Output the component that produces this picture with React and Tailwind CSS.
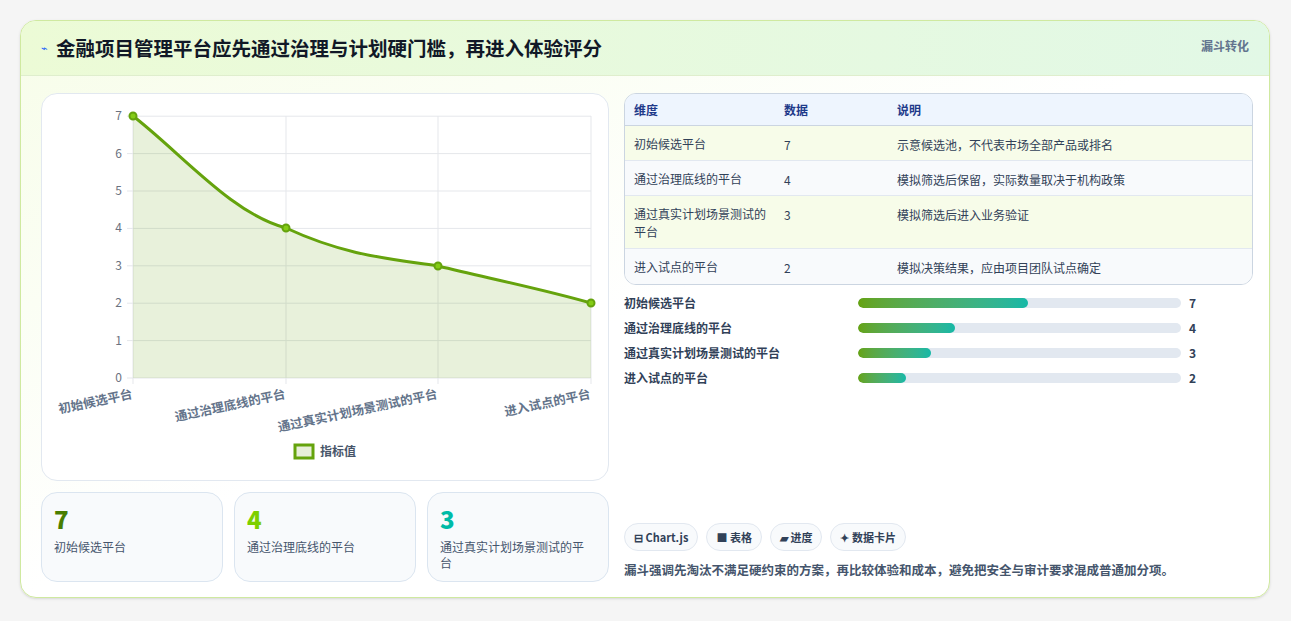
import React from "react";

const rows = [
  { name: "初始候选平台", value: 7, note: "示意候选池，不代表市场全部产品或排名" },
  { name: "通过治理底线的平台", value: 4, note: "模拟筛选后保留，实际数量取决于机构政策" },
  { name: "通过真实计划场景测试的平台", value: 3, note: "模拟筛选后进入业务验证" },
  { name: "进入试点的平台", value: 2, note: "模拟决策结果，应由项目团队试点确定" },
];

const font = { fontFamily: '"Noto Sans CJK SC", "Noto Sans", sans-serif' };

// chart geometry, in svg coords (svg placed at card origin x40,y93)
const pts = [
  [91, 22],
  [244, 134],
  [396, 172],
  [549, 209],
];
const base = 284;

function Chart() {
  const line = `M91 22 C140 60 190 120 244 134 C300 160 340 164 396 172 C450 185 500 195 549 209`;
  const area = `${line} L549 ${base} L91 ${base} Z`;
  const ys = [0, 1, 2, 3, 4, 5, 6, 7];
  return (
    <svg width="566" height="385" className="block">
      {ys.map((v) => {
        const y = base - v * 37.4;
        return (
          <g key={v}>
            <line x1="85" x2="549" y1={y} y2={y} stroke="#e5e7eb" />
            <text x="80" y={y + 4} textAnchor="end" fontSize="12" fill="#6b7280" style={font}>
              {v}
            </text>
          </g>
        );
      })}
      {pts.map(([x], i) => (
        <line key={i} x1={x} x2={x} y1="22" y2={base + 6} stroke="#e5e7eb" />
      ))}
      <path d={area} fill="rgba(101,163,13,0.15)" />
      <path d={line} fill="none" stroke="#65a30d" strokeWidth="3" />
      {pts.map(([x, y], i) => (
        <circle key={i} cx={x} cy={y} r="3.5" fill="#84cc16" stroke="#65a30d" strokeWidth="2" />
      ))}
      {rows.map((r, i) => (
        <text
          key={i}
          x={pts[i][0]}
          y={base + 20}
          textAnchor="end"
          fontSize="12.5"
          fontWeight="700"
          fill="#64748b"
          transform={`rotate(-12 ${pts[i][0]} ${base + 20})`}
          style={font}
        >
          {r.name}
        </text>
      ))}
      <rect x="253" y="351" width="18" height="13" fill="#e7efd9" stroke="#65a30d" strokeWidth="3" />
      <text x="278" y="362" fontSize="12" fill="#475569" fontWeight="600" style={font}>
        指标值
      </text>
    </svg>
  );
}

export default function App() {
  const cardColors = ["text-lime-700", "text-lime-500", "text-teal-500"];
  return (
    <div className="w-[1291px] h-[621px] bg-[#f5f5f5] pt-5 pl-5" style={font}>
      <div className="w-[1250px] h-[578px] rounded-2xl border border-[#cfe9a0] bg-gradient-to-br from-[#f7fde9] via-white to-white overflow-hidden shadow-sm">
        <div className="h-[55px] flex items-start justify-between px-5 pt-[12px] bg-gradient-to-r from-[#ecfbd6] to-[#e2f8e6] border-b border-[#dfeecd]">
          <div className="flex items-center gap-2">
            <span className="text-[11px] text-blue-600">⌁</span>
            <h1 className="text-[19.5px] font-bold text-[#111827]">金融项目管理平台应先通过治理与计划硬门槛，再进入体验评分</h1>
          </div>
          <span className="text-[12px] font-semibold text-slate-500 mt-[4px]">漏斗转化</span>
        </div>
        <div className="flex gap-[15px] px-5 pt-[17px]">
          <div className="w-[568px] flex flex-col gap-[11px]">
            <div className="h-[388px] rounded-2xl border border-[#e2e8f0] bg-white">
              <Chart />
            </div>
            <div className="grid grid-cols-3 gap-[11px]">
              {rows.slice(0, 3).map((r, i) => (
                <div key={i} className="h-[90px] rounded-2xl border border-[#dbe5f0] bg-[#f8fafc] pl-3 pr-5 pt-3">
                  <div className={`text-[24px] leading-7 font-extrabold ${cardColors[i]}`}>{r.value}</div>
                  <div className="text-[12px] leading-4 text-slate-600 mt-[6px]">{r.name}</div>
                </div>
              ))}
            </div>
          </div>
          <div className="flex-1 flex flex-col">
            <div className="w-[629px] rounded-xl border border-[#cbd5e1] overflow-hidden text-[12px] text-slate-700">
              <div className="flex h-8 items-center bg-[#eef5fe] text-[#1e3a8a] font-semibold border-b border-[#cbd5e1]">
                <div className="w-[159px] pl-[9px]">维度</div>
                <div className="w-[113px]">数据</div>
                <div>说明</div>
              </div>
              {rows.map((r, i) => (
                <div
                  key={i}
                  className={`flex items-start pt-[10px] border-b border-[#e2e8f0] last:border-b-0 ${i === 2 ? "h-[53px]" : "h-[35px]"} ${i % 2 === 0 ? "bg-[#f7fce9]" : "bg-[#f8fafc]"}`}
                >
                  <div className="w-[159px] pl-[9px] pr-3 leading-[18px] -mt-[1px]">{r.name}</div>
                  <div className="w-[113px]">{r.value}</div>
                  <div>{r.note}</div>
                </div>
              ))}
            </div>
            <div className="flex flex-col gap-[9px] mt-[10px] text-[12px] font-semibold text-slate-700">
              {rows.map((r, i) => (
                <div key={i} className="flex items-center h-[16px]">
                  <div className="w-[234px]">{r.name}</div>
                  <div className="w-[323px] h-[10px] rounded-full bg-[#e2e8f0] overflow-hidden">
                    <div
                      className="h-full rounded-full bg-gradient-to-r from-[#65a30d] to-[#14b8a6]"
                      style={{ width: `${r.value * 7.5}%` }}
                    />
                  </div>
                  <div className="ml-2 font-bold">{r.value}</div>
                </div>
              ))}
            </div>
            <div className="flex gap-2 mt-[137px] text-[11px] font-semibold text-slate-700">
              <span className="h-[28px] px-[9px] flex items-center rounded-full border border-[#e2e8f0] bg-[#f8fafc]">⊟ Chart.js</span>
              <span className="h-[28px] px-[9px] flex items-center rounded-full border border-[#e2e8f0] bg-[#f8fafc]">■ 表格</span>
              <span className="h-[28px] px-[9px] flex items-center rounded-full border border-[#e2e8f0] bg-[#f8fafc]">▰ 进度</span>
              <span className="h-[28px] px-[9px] flex items-center rounded-full border border-[#e2e8f0] bg-[#f8fafc]">✦ 数据卡片</span>
            </div>
            <p className="mt-[10px] text-[12.5px] font-semibold text-slate-600">
              漏斗强调先淘汰不满足硬约束的方案，再比较体验和成本，避免把安全与审计要求混成普通加分项。
            </p>
          </div>
        </div>
      </div>
    </div>
  );
}
